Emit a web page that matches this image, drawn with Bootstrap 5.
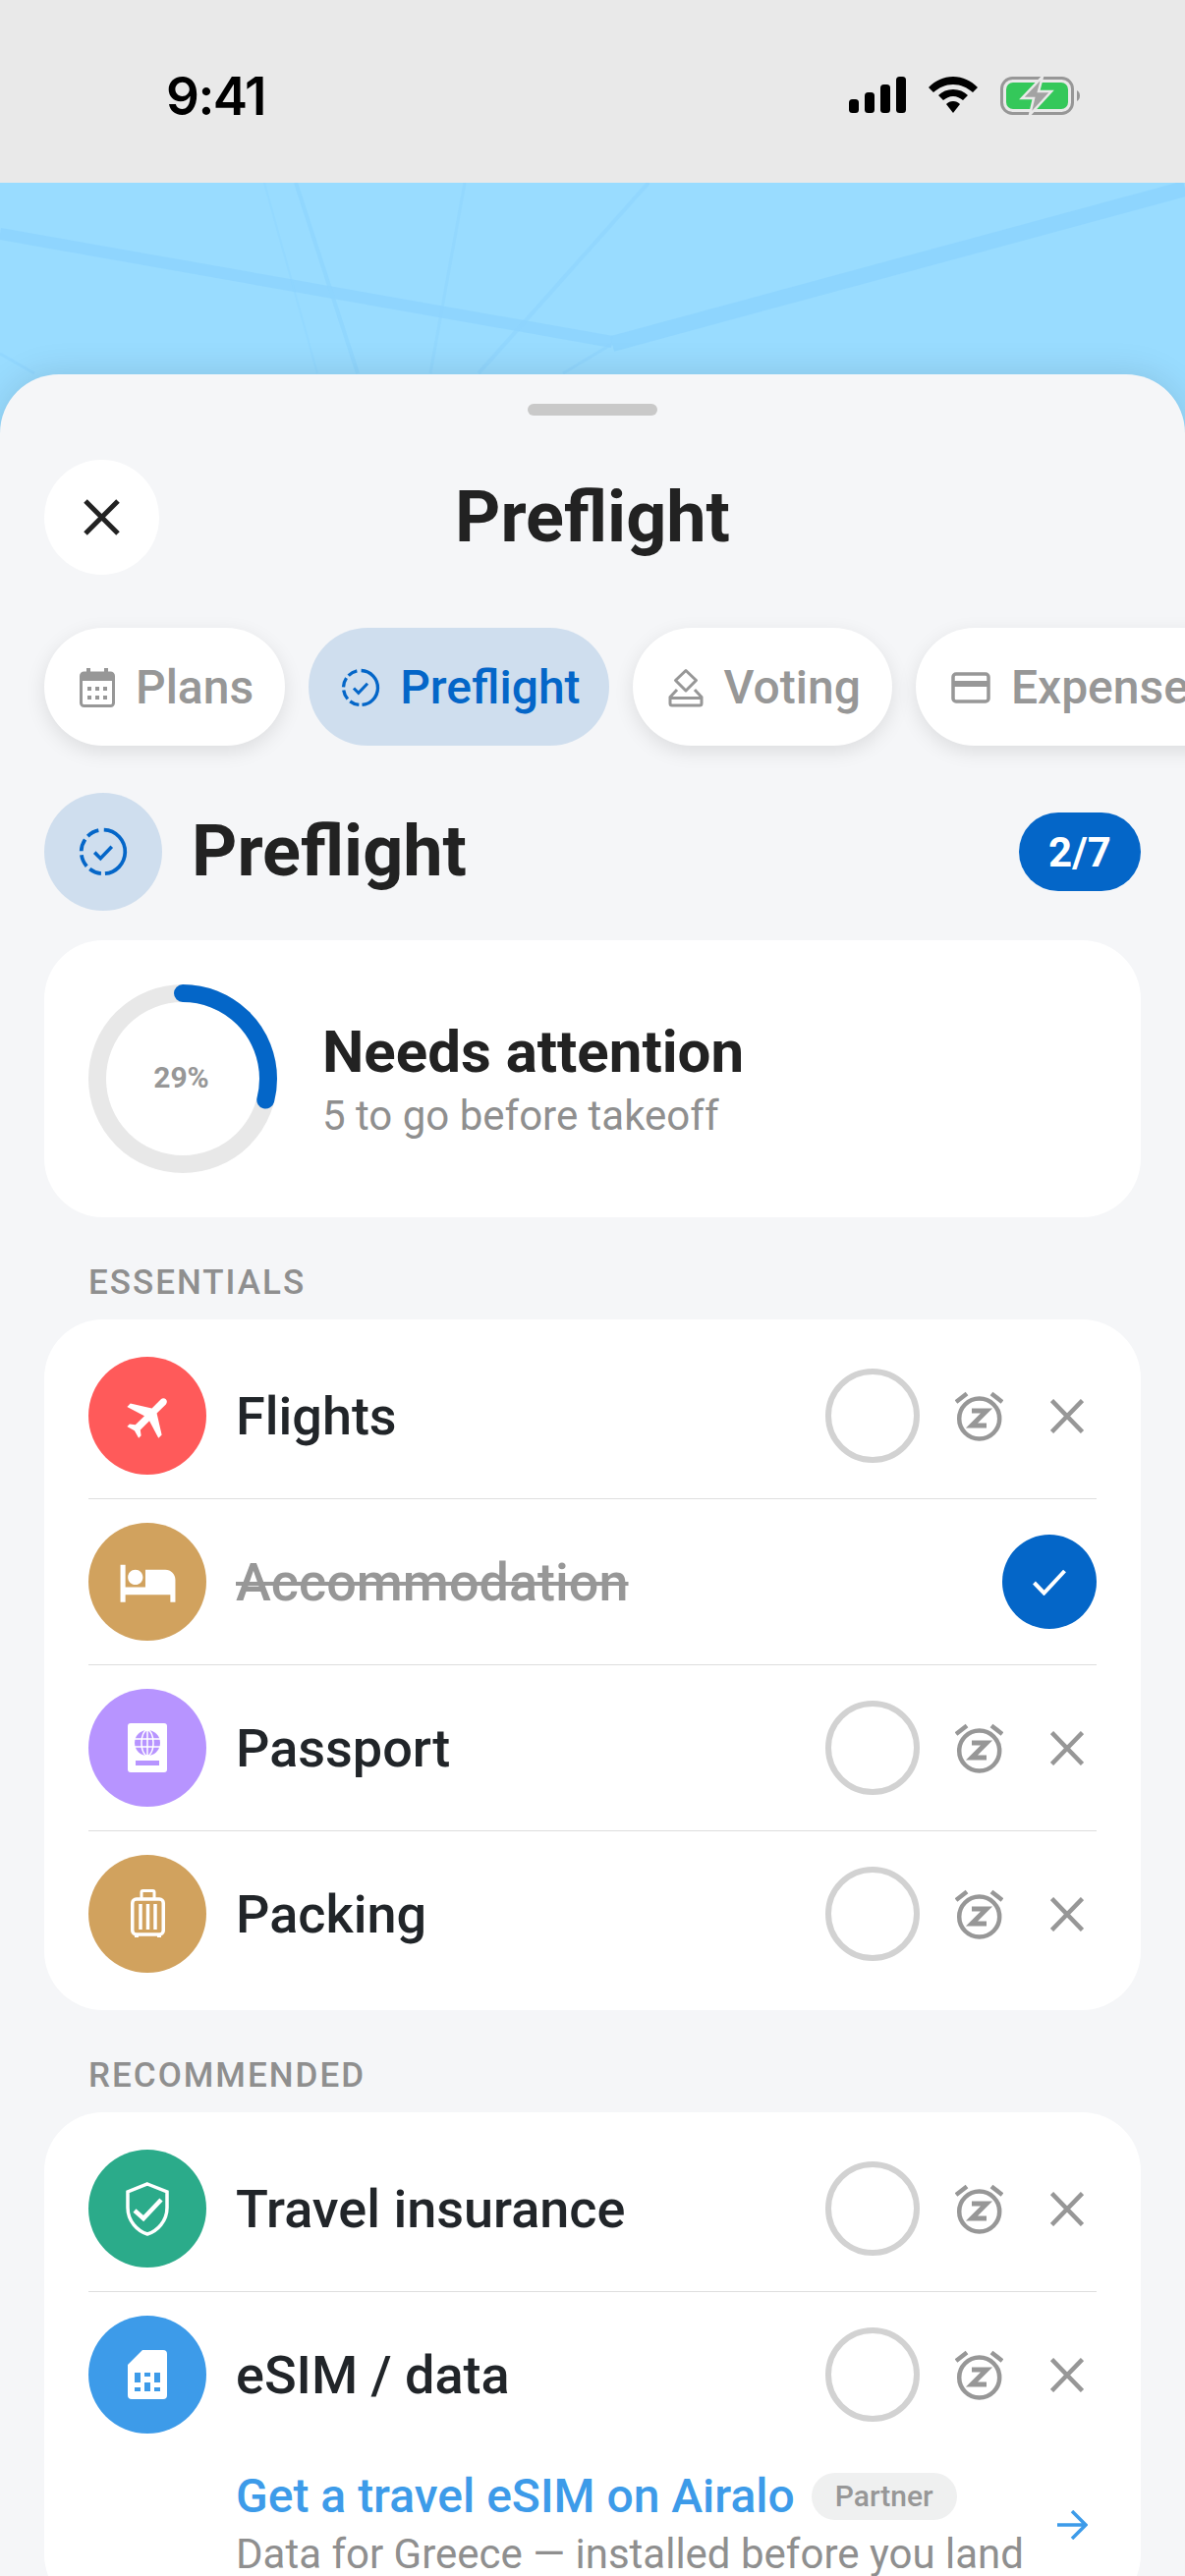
<!DOCTYPE html>
<html lang="en">
<head>
    <meta charset="UTF-8">
    <meta name="viewport" content="width=device-width, initial-scale=1.0">
    <title>Preflight</title>
    <link href="https://cdn.jsdelivr.net/npm/bootstrap@5.3.0/dist/css/bootstrap.min.css" rel="stylesheet">
    <style>
        html, body { height: 2622px; overflow: hidden; }
        body { font-family: "Roboto", "Liberation Sans", sans-serif; background: #f5f6f8; color: #222; }
        .status-strip { height: 186px; background: #e9e9e9; padding: 0 106px 0 169px; }
        .clock { font-family: "Inter", sans-serif; font-size: 53px; font-weight: 600; line-height: 1; color: #000; letter-spacing: -1.5px; margin-top: 72px; }
        .status-icons { margin-top: 78px; gap: 23px; }
        .map-area { height: 255px; background: #99dcff; position: relative; }
        .map-area svg { position: absolute; inset: 0; }
        .sheet { position: relative; margin-top: -60px; height: 2241px; background: #f5f6f8; border-radius: 60px 60px 0 0; box-shadow: 0 0 36px rgba(0, 0, 0, .12); padding-top: 30px; overflow: hidden; }
        .grabber { width: 132px; height: 12px; background: #c9c9c9; border-radius: 6px; margin: 0 auto; }
        .sheet-top { display: grid; grid-template-columns: 1fr auto 1fr; align-items: center; margin: 45px 45px 0; }
        .close-btn { width: 117px; height: 117px; background: #fff; border: 0; padding: 0; }
        .sheet-title { font-size: 72px; font-weight: 700; line-height: 1; margin: 0; }
        .tab-strip { gap: 24px; margin: 54px -200px 0 45px; padding: 0; }
        .tab-pill { height: 120px; padding: 2px 32px 0 36px; gap: 21px; background: #fff; color: #979797; font-size: 48px; font-weight: 500; box-shadow: 0 6px 20px rgba(0, 0, 0, .1); white-space: nowrap; }
        .tab-pill.is-active { background: #cfdeee; color: #0466c8; box-shadow: none; padding: 2px 29px 0 33px; gap: 20px; }
        .section-head { margin: 48px 45px 0; gap: 30px; }
        .head-dot { width: 120px; height: 120px; background: #cfdeee; }
        .section-name { font-size: 72px; font-weight: 700; line-height: 1; margin: 0; }
        .count-pill { width: 124px; height: 80px; background: #0466c8; color: #fff; font-size: 42px; font-weight: 700; margin-left: auto; }
        .white-panel { background: #fff; border: 0; border-radius: 60px; margin: 0 45px; }
        .ring-panel { margin-top: 30px; height: 282px; padding: 0 45px; gap: 46px; }
        .ring-wrap { width: 192px; height: 192px; position: relative; }
        .ring-label { position: absolute; inset: 0; font-size: 30px; font-weight: 700; color: #979797; padding: 0 3px 3px 0; }
        .attn-title { font-size: 60px; font-weight: 700; line-height: 68px; }
        .attn-sub { font-size: 42px; color: #8f8f8f; line-height: 48px; margin-top: 7px; }
        .group-label { font-size: 35px; font-weight: 500; letter-spacing: 2px; color: #8f8f8f; line-height: 40px; margin: 47px 90px 17px; }
        .todo-list { padding: 14px 0; }
        .todo-row { display: flex; align-items: center; padding: 24px 0; margin: 0 45px; background: transparent; border-color: #dedede; }
        .todo-dot { width: 120px; height: 120px; flex-shrink: 0; }
        .todo-name { font-size: 54px; font-weight: 500; margin-left: 30px; line-height: 1; padding-top: 2px; }
        .todo-name.is-done { color: #979797; text-decoration: line-through; text-decoration-thickness: 4px; }
        .tick-ring { width: 96px; height: 96px; border: 6px solid #d2d2d2; margin-left: auto; }
        .tick-done { width: 96px; height: 96px; background: #0466c8; margin-left: auto; }
        .snooze-ico { margin-left: 36px; }
        .drop-ico { margin-left: 48px; margin-right: 13px; }
        .partner-offer { margin: 40px 9px 0 150px; }
        .offer-title { font-size: 48px; font-weight: 500; color: #3d9be9; line-height: 48px; gap: 17px; }
        .partner-tag { height: 48px; padding: 0 24px; background: #eff0f0; color: #979797; font-size: 30px; font-weight: 500; }
        .offer-sub { font-size: 42px; color: #8f8f8f; line-height: 44px; margin-top: 13px; white-space: nowrap; }
    </style>
</head>
<body>

    <div class="status-strip d-flex justify-content-between align-items-start">
        <div class="clock">9:41</div>
        <div class="status-icons d-flex align-items-start">
            <svg width="58" height="37" viewBox="0 0 58 37">
                <rect x="0" y="23" width="10" height="14" rx="3.5" fill="#000"/>
                <rect x="16" y="16" width="10" height="21" rx="3.5" fill="#000"/>
                <rect x="32" y="8" width="10" height="29" rx="3.5" fill="#000"/>
                <rect x="48" y="0" width="10" height="37" rx="3.5" fill="#000"/>
            </svg>
            <svg width="50" height="37" viewBox="0 0 50 37">
                <path d="M25 0C15 0 7 4 0 11l5 5c6-5 12-8 20-8s14 3 20 8l5-5C43 4 35 0 25 0z" fill="#000"/>
                <path d="M25 13c-6 0-11 2-15 6l5 5c3-2 6-4 10-4s7 2 10 4l5-5c-4-4-9-6-15-6z" fill="#000"/>
                <path d="M25 25c-3 0-5 1-7 3l7 9 7-9c-2-2-4-3-7-3z" fill="#000"/>
            </svg>
            <svg width="82" height="39" viewBox="0 0 82 39" class="ms-n1">
                <rect x="1.5" y="1.5" width="72" height="36" rx="11" fill="none" stroke="#979797" stroke-width="3"/>
                <rect x="6" y="6" width="63" height="27" rx="7" fill="#34c85a"/>
                <path d="M78 14c2 1 3 3 3 5.500s-1 4.500-3 5.500z" fill="#979797"/>
                <path d="M43 0 22 22H34L30 39 52 15H39z" fill="#a3a3a3" stroke="#e9e9e9" stroke-width="2.500"/>
            </svg>
        </div>
    </div>

    <div class="map-area">
        <svg width="1206" height="255" viewBox="0 186 1206 255">
            <g fill="none" stroke="#8dd4fe">
                <path d="M0 238 623 348" stroke-width="12" opacity=".85"/>
                <path d="M623 350 1206 192" stroke-width="16" opacity=".9"/>
                <path d="M269 186 323 380" stroke-width="2" opacity=".4"/>
                <path d="M301 186 364 380" stroke-width="4" opacity=".7"/>
                <path d="M473 186 438 380" stroke-width="3" opacity=".5"/>
                <path d="M660 186 487 380" stroke-width="4" opacity=".6"/>
                <path d="M623 350 573 380" stroke-width="3" opacity=".6"/>
                <path d="M0 360 35 380" stroke-width="3" opacity=".6"/>
            </g>
        </svg>
    </div>

    <div class="sheet">
        <div class="grabber"></div>

        <div class="sheet-top">
            <button class="close-btn rounded-circle d-flex align-items-center justify-content-center">
                <svg width="37" height="37" viewBox="0 0 37 37"><path d="M2 2 35 35M35 2 2 35" stroke="#222" stroke-width="5" fill="none"/></svg>
            </button>
            <h1 class="sheet-title">Preflight</h1>
            <div></div>
        </div>

        <div class="tab-strip d-flex flex-nowrap">
            <div class="tab-pill rounded-pill d-flex align-items-center">
                <svg width="36" height="40" viewBox="0 0 36 40">
                    <path d="M7 0h4v6H7zM25 0h4v6h-4z" fill="#979797"/>
                    <rect x="1.500" y="5" width="33" height="33.500" rx="3" fill="none" stroke="#979797" stroke-width="3"/>
                    <rect x="2" y="5" width="32" height="8" fill="#979797"/>
                    <path d="M8 19h4v4H8zM16 19h4v4h-4zM24 19h4v4h-4zM8 28h4v4H8zM16 28h4v4h-4zM24 28h4v4h-4z" fill="#979797"/>
                </svg>
                Plans
            </div>
            <div class="tab-pill is-active rounded-pill d-flex align-items-center">
                <svg width="40" height="40" viewBox="0 0 24 24">
                    <circle cx="12" cy="12" r="10.500" pathLength="100" fill="none" stroke="#0466c8" stroke-width="2" stroke-dasharray="48 3 9 3 9 3 9 3 9 4" transform="rotate(-88 12 12)"/>
                    <path d="M7.800 12.300l2.900 2.900 5.500-5.700" fill="none" stroke="#0466c8" stroke-width="1.800"/>
                </svg>
                Preflight
            </div>
            <div class="tab-pill rounded-pill d-flex align-items-center">
                <svg width="36" height="40" viewBox="0 0 36 40" fill="none" stroke="#979797" stroke-width="3">
                    <path d="M18 2.500 28.500 12.500 18 23 7.500 12.500z" stroke-linejoin="round"/>
                    <path d="M9 22 2 29.500V36a2 2 0 0 0 2 2h28a2 2 0 0 0 2-2v-6.500L27 22"/>
                    <path d="M2 30.500h32"/>
                </svg>
                Voting
            </div>
            <div class="tab-pill rounded-pill d-flex align-items-center">
                <svg width="40" height="32" viewBox="0 0 40 32">
                    <rect x="2" y="2" width="36" height="28" rx="3" fill="none" stroke="#979797" stroke-width="3.500"/>
                    <rect x="2" y="9" width="36" height="6" fill="#979797"/>
                </svg>
                Expenses
            </div>
        </div>

        <div class="section-head d-flex align-items-center">
            <div class="head-dot rounded-circle d-flex align-items-center justify-content-center">
                <svg width="50" height="50" viewBox="0 0 24 24">
                    <circle cx="12" cy="12" r="10.700" pathLength="100" fill="none" stroke="#0466c8" stroke-width="1.800" stroke-dasharray="48 3 9 3 9 3 9 3 9 4" transform="rotate(-88 12 12)"/>
                    <path d="M7.800 12.300l2.900 2.900 5.500-5.700" fill="none" stroke="#0466c8" stroke-width="1.700"/>
                </svg>
            </div>
            <h2 class="section-name">Preflight</h2>
            <div class="count-pill rounded-pill d-flex align-items-center justify-content-center">2/7</div>
        </div>

        <div class="white-panel ring-panel d-flex align-items-center">
            <div class="ring-wrap">
                <svg width="192" height="192" viewBox="0 0 192 192">
                    <circle cx="96" cy="96" r="87" fill="none" stroke="#e8e8e8" stroke-width="18"/>
                    <circle cx="96" cy="96" r="87" fill="none" stroke="#0466c8" stroke-width="18" stroke-linecap="round" pathLength="100" stroke-dasharray="29 71" transform="rotate(-90 96 96)"/>
                </svg>
                <div class="ring-label d-flex align-items-center justify-content-center">29%</div>
            </div>
            <div>
                <div class="attn-title">Needs attention</div>
                <div class="attn-sub">5 to go before takeoff</div>
            </div>
        </div>

        <div class="group-label text-uppercase">Essentials</div>
        <div class="card white-panel todo-list">
            <ul class="list-group list-group-flush">
                <li class="list-group-item todo-row">
                    <span class="todo-dot rounded-circle d-flex align-items-center justify-content-center" style="background:#ff5a5a">
                        <svg width="57" height="57" viewBox="0 0 24 24"><path d="M21 16v-2l-8-5V3.500c0-.83-.67-1.500-1.500-1.500S10 2.670 10 3.500V9l-8 5v2l8-2.500V19l-2 1.500V22l3.500-1 3.500 1v-1.500L13 19v-5.500l8 2.500z" fill="#fff" transform="translate(1 .2) rotate(45 12 12)"/></svg>
                    </span>
                    <span class="todo-name">Flights</span>
                    <span class="tick-ring rounded-circle"></span>
                    <svg class="snooze-ico" width="49" height="51" viewBox="0 0 49 51" fill="none" stroke="#979797" stroke-width="4.500"><circle cx="24.700" cy="28" r="20.500"/><path d="M1 11 12 2.500M37 2.500 48 11"/><path d="M17 20H32L17 35H32" stroke-width="5"/></svg>
                    <svg class="drop-ico" width="34" height="35" viewBox="0 0 34 35"><path d="M1.500 1.500 32.500 33.500M32.500 1.500 1.500 33.500" stroke="#979797" stroke-width="4.500" fill="none"/></svg>
                </li>
                <li class="list-group-item todo-row">
                    <span class="todo-dot rounded-circle d-flex align-items-center justify-content-center" style="background:#d1a25e">
                        <svg width="61" height="61" viewBox="0 0 24 24"><path d="M7 13c1.660 0 3-1.340 3-3S8.660 7 7 7s-3 1.340-3 3 1.340 3 3 3zm12-6h-8v7H3V5H1v15h2v-3h18v3h2v-9c0-2.210-1.790-4-4-4z" fill="#fff"/></svg>
                    </span>
                    <span class="todo-name is-done">Accommodation</span>
                    <span class="tick-done rounded-circle d-flex align-items-center justify-content-center">
                        <svg width="34" height="27" viewBox="0 0 34 27"><path d="M1.500 14 11.500 24.500 32.500 2" fill="none" stroke="#fff" stroke-width="4"/></svg>
                    </span>
                </li>
                <li class="list-group-item todo-row">
                    <span class="todo-dot rounded-circle d-flex align-items-center justify-content-center" style="background:#b794ff">
                        <svg width="40" height="50" viewBox="0 0 40 50">
                            <rect width="40" height="50" rx="3" fill="#fff"/>
                            <circle cx="20" cy="20" r="13" fill="#b794ff"/>
                            <g fill="none" stroke="#fff" stroke-width="1.500"><ellipse cx="20" cy="20" rx="6" ry="13"/><path d="M7 16h26M7 24h26M20 7v26"/></g>
                            <rect x="8" y="38" width="24" height="5" fill="#b794ff"/>
                        </svg>
                    </span>
                    <span class="todo-name">Passport</span>
                    <span class="tick-ring rounded-circle"></span>
                    <svg class="snooze-ico" width="49" height="51" viewBox="0 0 49 51" fill="none" stroke="#979797" stroke-width="4.500"><circle cx="24.700" cy="28" r="20.500"/><path d="M1 11 12 2.500M37 2.500 48 11"/><path d="M17 20H32L17 35H32" stroke-width="5"/></svg>
                    <svg class="drop-ico" width="34" height="35" viewBox="0 0 34 35"><path d="M1.500 1.500 32.500 33.500M32.500 1.500 1.500 33.500" stroke="#979797" stroke-width="4.500" fill="none"/></svg>
                </li>
                <li class="list-group-item todo-row">
                    <span class="todo-dot rounded-circle d-flex align-items-center justify-content-center" style="background:#d1a25e">
                        <svg width="35" height="50" viewBox="0 0 35 50" fill="none" stroke="#fff" stroke-width="3.500">
                            <path d="M11 10V3a1.500 1.500 0 0 1 1.500-1.500h10A1.500 1.500 0 0 1 24 3v7" stroke-width="3"/>
                            <rect x="1.750" y="10" width="31.500" height="36" rx="4"/>
                            <path d="M10 15v26M17.500 15v26M25 15v26"/>
                            <path d="M6 46v3M29 46v3" stroke-width="4"/>
                        </svg>
                    </span>
                    <span class="todo-name">Packing</span>
                    <span class="tick-ring rounded-circle"></span>
                    <svg class="snooze-ico" width="49" height="51" viewBox="0 0 49 51" fill="none" stroke="#979797" stroke-width="4.500"><circle cx="24.700" cy="28" r="20.500"/><path d="M1 11 12 2.500M37 2.500 48 11"/><path d="M17 20H32L17 35H32" stroke-width="5"/></svg>
                    <svg class="drop-ico" width="34" height="35" viewBox="0 0 34 35"><path d="M1.500 1.500 32.500 33.500M32.500 1.500 1.500 33.500" stroke="#979797" stroke-width="4.500" fill="none"/></svg>
                </li>
            </ul>
        </div>

        <div class="group-label text-uppercase">Recommended</div>
        <div class="card white-panel todo-list">
            <ul class="list-group list-group-flush">
                <li class="list-group-item todo-row">
                    <span class="todo-dot rounded-circle d-flex align-items-center justify-content-center" style="background:#2bab8a">
                        <svg width="44" height="55" viewBox="0 0 44 55" fill="none" stroke="#fff">
                            <path d="M22 2 42 10V26C42 40 32 50 22 53 12 50 2 40 2 26V10z" stroke-width="3.500"/>
                            <path d="M9 29 18 37 36 18" stroke-width="4.500"/>
                        </svg>
                    </span>
                    <span class="todo-name">Travel insurance</span>
                    <span class="tick-ring rounded-circle"></span>
                    <svg class="snooze-ico" width="49" height="51" viewBox="0 0 49 51" fill="none" stroke="#979797" stroke-width="4.500"><circle cx="24.700" cy="28" r="20.500"/><path d="M1 11 12 2.500M37 2.500 48 11"/><path d="M17 20H32L17 35H32" stroke-width="5"/></svg>
                    <svg class="drop-ico" width="34" height="35" viewBox="0 0 34 35"><path d="M1.500 1.500 32.500 33.500M32.500 1.500 1.500 33.500" stroke="#979797" stroke-width="4.500" fill="none"/></svg>
                </li>
                <li class="list-group-item todo-row flex-wrap">
                    <span class="todo-dot rounded-circle d-flex align-items-center justify-content-center" style="background:#3d9be9">
                        <svg width="40" height="50" viewBox="0 0 40 50">
                            <path d="M15 0H36a4 4 0 0 1 4 4V46a4 4 0 0 1-4 4H4a4 4 0 0 1-4-4V15z" fill="#fff"/>
                            <path d="M7 23h6v10H7zM7 38h6v4H7zM17 23h6v4h-6zM17 33h6v9h-6zM27 23h6v10h-6zM27 38h6v4h-6z" fill="#3d9be9"/>
                        </svg>
                    </span>
                    <span class="todo-name">eSIM / data</span>
                    <span class="tick-ring rounded-circle"></span>
                    <svg class="snooze-ico" width="49" height="51" viewBox="0 0 49 51" fill="none" stroke="#979797" stroke-width="4.500"><circle cx="24.700" cy="28" r="20.500"/><path d="M1 11 12 2.500M37 2.500 48 11"/><path d="M17 20H32L17 35H32" stroke-width="5"/></svg>
                    <svg class="drop-ico" width="34" height="35" viewBox="0 0 34 35"><path d="M1.500 1.500 32.500 33.500M32.500 1.500 1.500 33.500" stroke="#979797" stroke-width="4.500" fill="none"/></svg>
                    <div class="partner-offer w-100 d-flex align-items-center justify-content-between">
                        <div>
                            <div class="offer-title d-flex align-items-center">
                                Get a travel eSIM on Airalo
                                <span class="partner-tag rounded-pill d-flex align-items-center">Partner</span>
                            </div>
                            <div class="offer-sub">Data for Greece — installed before you land</div>
                        </div>
                        <svg width="31" height="30" viewBox="0 0 31 30"><path d="M0 15H29M15 1 29 15 15 29" fill="none" stroke="#3d9be9" stroke-width="3.500"/></svg>
                    </div>
                </li>
            </ul>
        </div>
    </div>

</body>
</html>
